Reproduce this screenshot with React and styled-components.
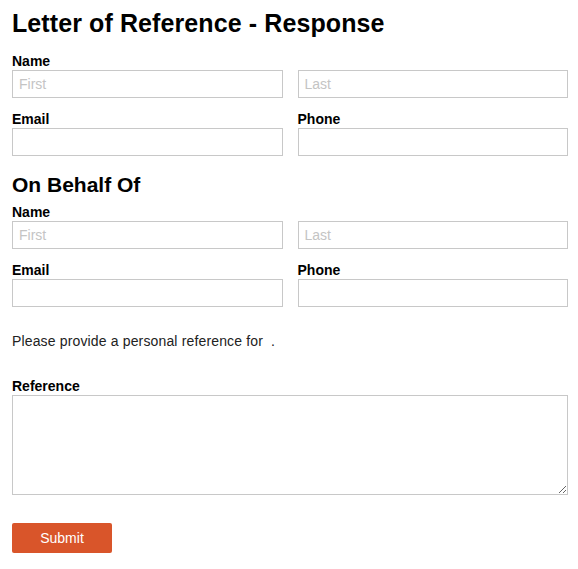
import React from "react";
import styled, {createGlobalStyle} from 'styled-components';

const GlobalStyle = createGlobalStyle`
  html, body {
    margin: 0;
    padding: 0;
    background: #fff;
  }
  body {
    font-family: "Liberation Sans", Arial, sans-serif;
    color: #000;
  }
`;

const Page = styled.form`
  padding: 8px 10px 16px 12px;
`;

const Title = styled.h1`
  margin: 0 0 15px 0;
  font-size: 25px;
  line-height: 30px;
  font-weight: bold;
  letter-spacing: 0.1px;
`;

const SubTitle = styled.h2`
  margin: 17px 0 7px 0;
  font-size: 21px;
  line-height: 24px;
  font-weight: bold;
`;

const Row = styled.div`
  display: grid;
  grid-template-columns: 1fr 1fr;
  column-gap: 15px;
  row-gap: 13px;
`;

const Field = styled.div`
  display: flex;
  flex-direction: column;
  margin-top: ${props => props.spaced ? '28px' : '0'};
`;

const Label = styled.label`
  display: block;
  font-size: 14px;
  line-height: 17px;
  font-weight: bold;
`;

const Input = styled.input`
  box-sizing: border-box;
  width: 100%;
  height: 28px;
  margin: 0;
  padding: 0 6px;
  border: 1px solid #c8c8c8;
  border-radius: 0;
  font-family: "Liberation Sans", Arial, sans-serif;
  font-size: 14px;
  color: #333;
  outline: none;

  &::placeholder {
    color: #c4c4c4;
  }
`;

const TextArea = styled.textarea`
  box-sizing: border-box;
  display: block;
  width: 100%;
  height: 100px;
  margin: 0;
  padding: 4px 6px;
  border: 1px solid #c8c8c8;
  border-radius: 0;
  font-family: "Liberation Sans", Arial, sans-serif;
  font-size: 14px;
  outline: none;
`;

const Note = styled.p`
  margin: 26px 0 0 0;
  font-size: 14px;
  line-height: 17px;
  color: #222;
  letter-spacing: 0.15px;
`;

const SubmitButton = styled.button`
  display: block;
  margin-top: 28px;
  width: 100px;
  height: 30px;
  padding: 0;
  border: none;
  border-radius: 2px;
  background: #d9552a;
  color: #fff;
  font-family: "Liberation Sans", Arial, sans-serif;
  font-size: 14px;
  cursor: pointer;
`;

const NameEmailBlock = () => (
  <Row>
    <Field>
      <Label>Name</Label>
      <Input placeholder="First" />
    </Field>
    <Field>
      <Label>&nbsp;</Label>
      <Input placeholder="Last" />
    </Field>
    <Field>
      <Label>Email</Label>
      <Input />
    </Field>
    <Field>
      <Label>Phone</Label>
      <Input />
    </Field>
  </Row>
);

const App = () => {
  return (
    <>
      <GlobalStyle />
      <Page onSubmit={e => e.preventDefault()}>
        <Title>Letter of Reference - Response</Title>
        <NameEmailBlock />
        <SubTitle>On Behalf Of</SubTitle>
        <NameEmailBlock />
        <Note>Please provide a personal reference for &nbsp;.</Note>
        <Field spaced>
          <Label>Reference</Label>
          <TextArea />
        </Field>
        <SubmitButton type="submit">Submit</SubmitButton>
      </Page>
    </>
  );
};

export default App;
